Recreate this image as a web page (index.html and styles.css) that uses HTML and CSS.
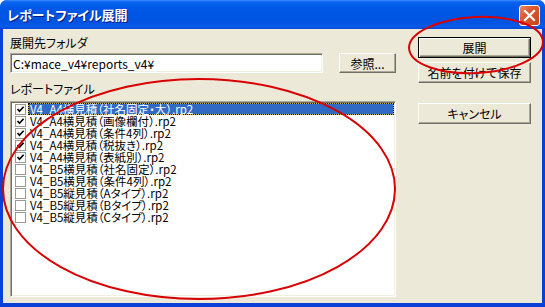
FILE: index.html
```html
<!DOCTYPE html>
<html lang="ja">
<head>
  <meta charset="UTF-8">
  <title>レポートファイル展開</title>
  <link rel="stylesheet" href="styles.css">
</head>
<body>

  <div class="window">
    <div class="titlebar">
      <span class="title">レポートファイル展開</span>
      <button class="close" aria-label="閉じる">
        <svg width="13" height="13" viewBox="0 0 13 13"><path d="M2 2 L11 11 M11 2 L2 11" stroke="#fff" stroke-width="2.2" stroke-linecap="square"/></svg>
      </button>
    </div>

    <div class="client">
      <div class="main">
        <label class="caption" for="dest">展開先フォルダ</label>
        <div class="path-row">
          <input type="text" id="dest" class="path" value="C:¥mace_v4¥reports_v4¥">
          <button class="btn browse">参照...</button>
        </div>

        <label class="caption">レポートファイル</label>
        <ul class="files">
          <li class="checked selected"><span class="box"></span><span class="name">V4_A4横見積（社名固定・大）.rp2</span></li>
          <li class="checked"><span class="box"></span><span class="name">V4_A4横見積（画像欄付）.rp2</span></li>
          <li class="checked"><span class="box"></span><span class="name">V4_A4横見積（条件4列）.rp2</span></li>
          <li class="checked"><span class="box"></span><span class="name">V4_A4横見積（税抜き）.rp2</span></li>
          <li class="checked"><span class="box"></span><span class="name">V4_A4横見積（表紙別）.rp2</span></li>
          <li><span class="box"></span><span class="name">V4_B5横見積（社名固定）.rp2</span></li>
          <li><span class="box"></span><span class="name">V4_B5横見積（条件4列）.rp2</span></li>
          <li><span class="box"></span><span class="name">V4_B5縦見積（Aタイプ）.rp2</span></li>
          <li><span class="box"></span><span class="name">V4_B5縦見積（Bタイプ）.rp2</span></li>
          <li><span class="box"></span><span class="name">V4_B5縦見積（Cタイプ）.rp2</span></li>
        </ul>
      </div>

      <div class="actions">
        <button class="btn default">展開</button>
        <button class="btn">名前を付けて保存</button>
        <button class="btn cancel">キャンセル</button>
      </div>
    </div>

    <!-- 赤丸の注釈 -->
    <svg class="marks" width="545" height="307" viewBox="0 0 545 307">
      <ellipse cx="476" cy="45" rx="67" ry="28" transform="rotate(-3 476 45)" fill="none" stroke="#d80000" stroke-width="2"/>
      <ellipse cx="199" cy="189" rx="196" ry="110" fill="none" stroke="#d80000" stroke-width="2"/>
    </svg>
  </div>

</body>
</html>
```

FILE: styles.css
```css
* {
  box-sizing: border-box;
}
body {
  margin: 0;
  background-color: #fff;
  font-family: "Noto Sans CJK JP", "Liberation Sans", sans-serif;
  font-size: 12px;
  font-feature-settings: "palt";
  color: #000;
}
.window {
  position: relative;
  width: 545px;
  height: 307px;
  display: flex;
  flex-direction: column;
  border-radius: 7px 7px 0 0;
  background-color: #0a40d8;
  overflow: hidden;
}

/* タイトルバー */
.titlebar {
  height: 29px;
  flex-shrink: 0;
  display: flex;
  align-items: flex-start;
  justify-content: space-between;
  padding: 5px 5px 0 7px;
  background: linear-gradient(#3a8cff 0, #0a64f0 2px, #0058e6 8px, #0053e0 22px, #0a5ae8 27px, #0046d4 29px);
}
.title {
  color: #fff;
  font-size: 13px;
  font-weight: bold;
  line-height: 20px;
  text-shadow: 1px 1px #0a1883;
}
.close {
  width: 21px;
  height: 21px;
  padding: 0;
  display: flex;
  align-items: center;
  justify-content: center;
  border: 1px solid #fff;
  border-radius: 3px;
  background: linear-gradient(135deg, #eb8a68 0%, #e05a33 35%, #c8411a 100%);
}

/* 本体 */
.client {
  flex: 1;
  display: flex;
  margin: 0 3px 4px 3px;
  background-color: #ece9d8;
}
.main {
  width: 393px;
  padding-left: 7px;
}
.caption {
  display: block;
  height: 14px;
  line-height: 14px;
  margin-top: 7px;
}
.path-row {
  display: flex;
  gap: 16px;
  margin-top: 3px;
}
.path {
  width: 313px;
  height: 20px;
  padding: 0 0 0 2px;
  font: inherit;
  border: 1px solid;
  border-color: #aca899 #fff #fff #aca899;
  box-shadow: inset 1px 1px #716f64, inset -1px -1px #f1efe2;
  background-color: #fff;
}
.path-row + .caption {
  margin-top: 9px;
}

.btn {
  height: 21px;
  padding: 0;
  font: inherit;
  color: #000;
  background-color: #ece9d8;
  border: 1px solid;
  border-color: #fff #716f64 #716f64 #fff;
  box-shadow: inset -1px -1px #aca899;
}
.browse {
  width: 57px;
  height: 20px;
}

/* ファイル一覧 */
.files {
  list-style: none;
  margin: 5px 0 0 0;
  padding: 1px 1px 0 1px;
  width: 386px;
  height: 196px;
  border: 1px solid;
  border-color: #aca899 #fff #fff #aca899;
  box-shadow: inset 1px 1px #716f64, inset -1px -1px #f1efe2;
  background-color: #fff;
  font-size: 11.5px;
}
.files li {
  display: flex;
  align-items: center;
  height: 12px;
  line-height: 12px;
  padding-left: 3px;
}
.box {
  width: 11px;
  height: 11px;
  flex-shrink: 0;
  border: 1px solid #9a9a94;
  background-color: #fff;
}
.checked .box {
  background: #fff url("data:image/svg+xml,%3Csvg xmlns='http://www.w3.org/2000/svg' width='9' height='9'%3E%3Cpath d='M1.5 4 L3.5 6.3 L7.6 1.8' fill='none' stroke='%23000' stroke-width='1.7'/%3E%3C/svg%3E") no-repeat center;
}
.name {
  flex: 1;
  margin-left: 2px;
  padding-left: 1px;
  height: 12px;
  border: 1px solid transparent;
  line-height: 10px;
}
.selected .name {
  color: #fff;
  border: 1px dotted #000;
  background: linear-gradient(#316ac5, #316ac5) padding-box, linear-gradient(#d6b85a, #d6b85a) border-box;
}

/* 右側のボタン */
.actions {
  width: 113px;
  margin-left: 22px;
  padding-top: 8px;
  display: flex;
  flex-direction: column;
}
.actions .btn + .btn {
  margin-top: 4px;
}
.actions .cancel {
  margin-top: 20px !important;
}
.default {
  border: 1px solid #000;
  box-shadow: inset 1px 1px #fff, inset -1px -1px #716f64, inset -2px -2px #aca899;
}

.marks {
  position: absolute;
  left: 0;
  top: 0;
  pointer-events: none;
}
```
